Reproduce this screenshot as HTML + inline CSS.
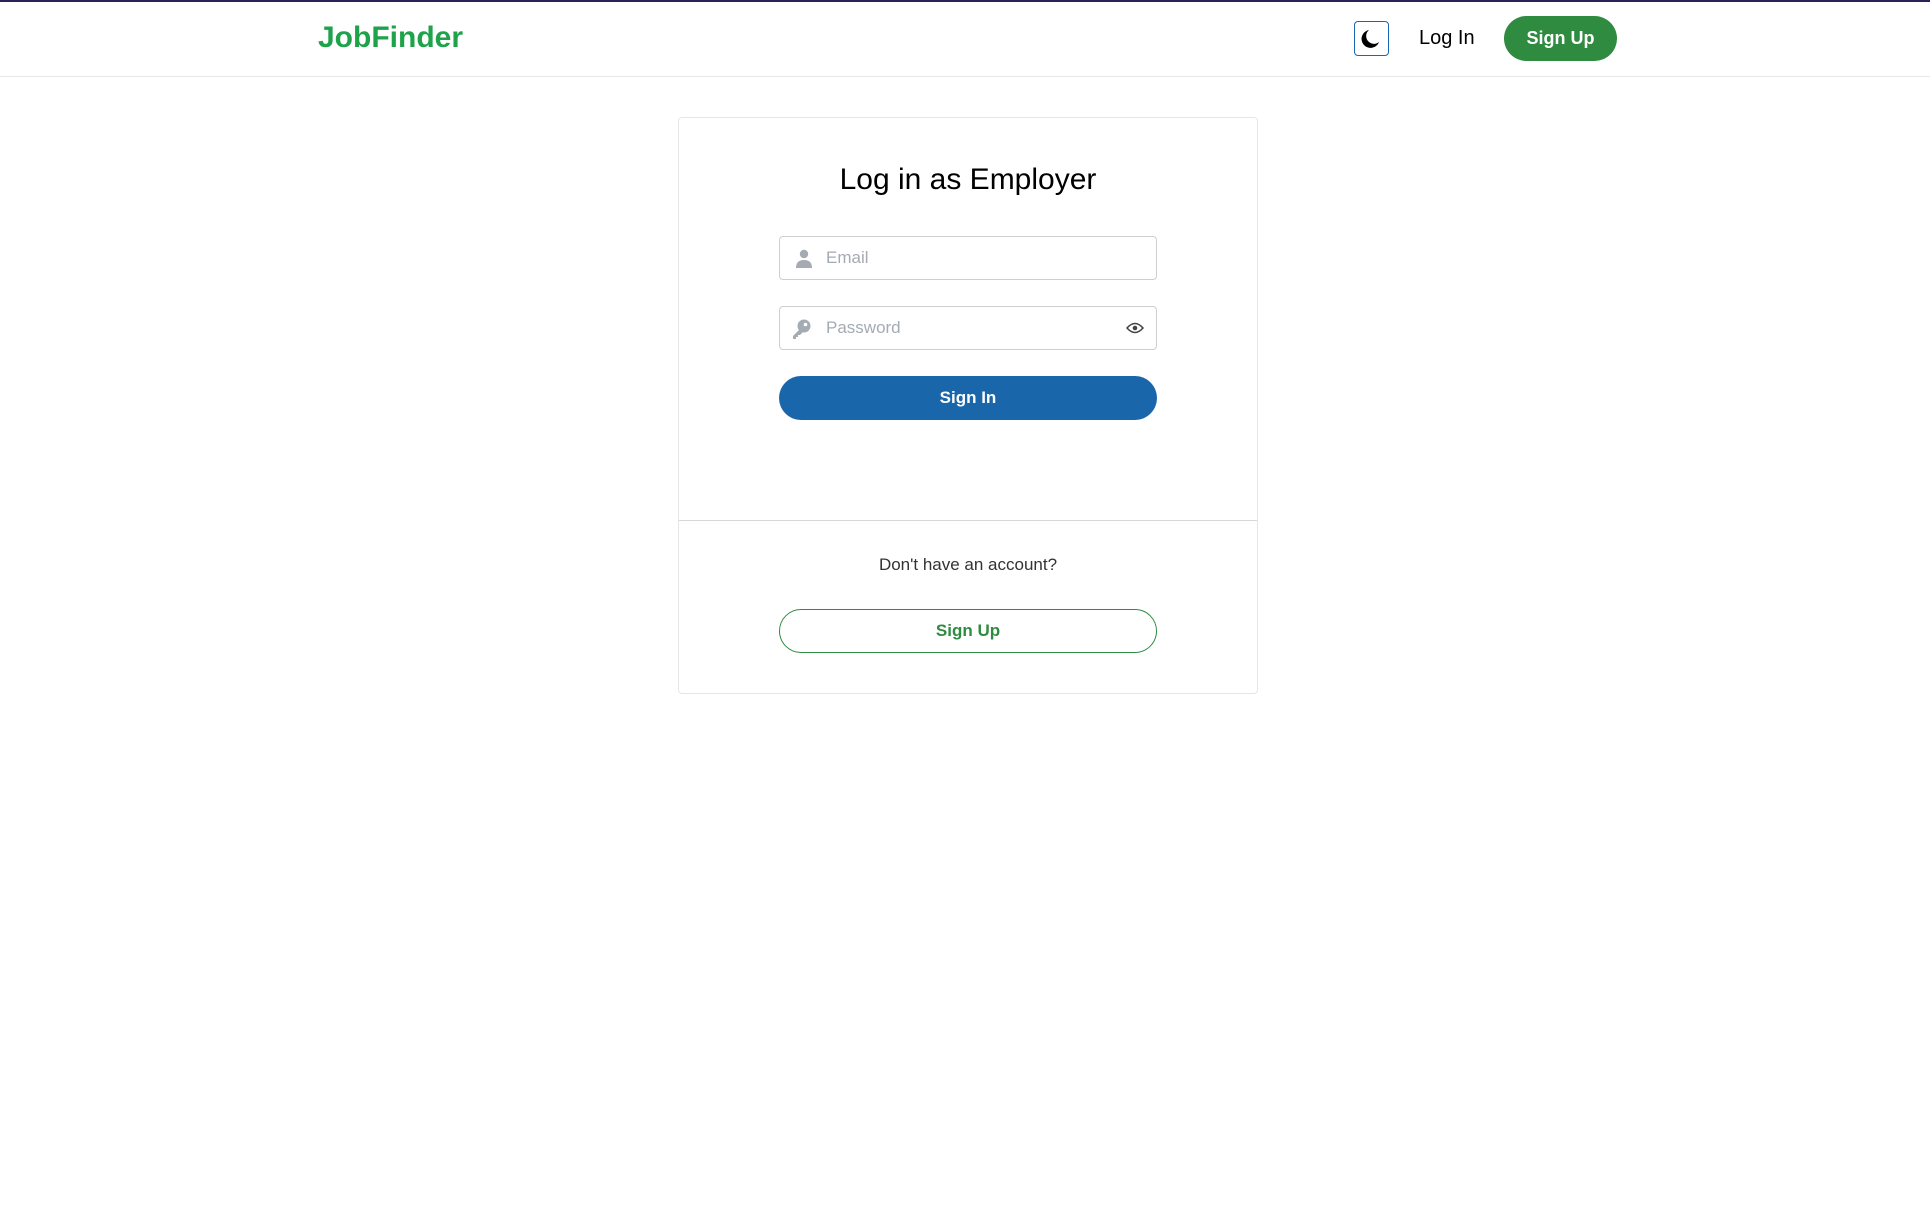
<!DOCTYPE html>
<html><head><meta charset="utf-8"><style>
*{box-sizing:border-box;margin:0;padding:0}
body{width:1930px;height:1213px;background:#fff;font-family:"Liberation Sans",Arial,sans-serif;position:relative;overflow:hidden}
.topbar{position:absolute;left:0;top:0;width:1930px;height:2px;background:#2b2257}
.header{position:absolute;left:0;top:2px;width:1930px;height:75px;border-bottom:1px solid #e8e8e8}
.logo{position:absolute;left:318px;top:18px;font-size:30px;font-weight:bold;color:#1fa34a;line-height:36px}
.moon{position:absolute;left:1354px;top:19px;width:35px;height:35px;border:1.5px solid #1a66b0;border-radius:4px}
.login{position:absolute;left:1419px;top:24px;font-size:20px;color:#000;line-height:24px}
.hsign{position:absolute;left:1504px;top:14px;width:113px;height:45px;border-radius:23px;background:#2e8b40;color:#fff;font-weight:bold;font-size:18px;line-height:45px;text-align:center}
.card{position:absolute;left:678px;top:117px;width:580px;height:577px;border:1px solid #e6e6e6;border-radius:4px}
.title{position:absolute;left:0;width:100%;top:44px;text-align:center;font-size:30px;color:#000;line-height:36px}
.inp{position:absolute;left:100px;width:378px;height:44px;border:1px solid #cfcfcf;border-radius:4px}
.inp span{position:absolute;left:46px;top:0;line-height:42px;font-size:17px;color:#a5abb3}
.btn{position:absolute;left:100px;width:378px;height:44px;border-radius:22px;text-align:center;line-height:44px;font-weight:bold;font-size:17px}
.divider{position:absolute;left:0;top:402px;width:100%;height:1px;background:#d8d8d8}
.dont{position:absolute;left:0;width:100%;top:435px;text-align:center;font-size:17px;color:#333;line-height:24px}
</style></head><body>
<div class="topbar"></div>
<div class="header">
<div class="logo">JobFinder</div>
<div class="moon"><svg width="32" height="32" viewBox="0 0 32 32" style="position:absolute;left:0;top:0"><path d="M14 8 A9 9 0 1 0 24 20 A7.5 7.5 0 0 1 14 8 Z" fill="#000"/></svg></div>
<div class="login">Log In</div>
<div class="hsign">Sign Up</div>
</div>
<div class="card">
<div class="title">Log in as Employer</div>
<div class="inp" style="top:118px"><svg width="18" height="20" viewBox="0 0 18 20" style="position:absolute;left:15px;top:12px"><circle cx="9" cy="5" r="4.2" fill="#a5abb3"/><path d="M1 19 Q1 11 9 11 Q17 11 17 19 Z" fill="#a5abb3"/></svg><span>Email</span></div>
<div class="inp" style="top:188px"><svg width="22" height="22" viewBox="0 0 22 22" style="position:absolute;left:10px;top:11px"><circle cx="14" cy="8" r="6.5" fill="#a5abb3"/><circle cx="15.5" cy="6.5" r="1.8" fill="#fff"/><path d="M10 11 L3 18 L3 21 L6 21 L6 19 L8 19 L8 17 L10 17 L13 14 Z" fill="#a5abb3"/></svg><span>Password</span>
<svg width="18" height="12" viewBox="0 0 18 12" style="position:absolute;left:346px;top:15px"><path d="M1 6 Q9 -3 17 6 Q9 15 1 6 Z" fill="none" stroke="#444" stroke-width="1.5"/><circle cx="9" cy="6" r="2.3" fill="#444"/></svg></div>
<div class="btn" style="top:258px;background:#1a66ab;color:#fff">Sign In</div>
<div class="divider"></div>
<div class="dont">Don't have an account?</div>
<div class="btn" style="top:491px;border:1px solid #2e8b40;color:#2e8b40;line-height:42px">Sign Up</div>
</div>
</body></html>
